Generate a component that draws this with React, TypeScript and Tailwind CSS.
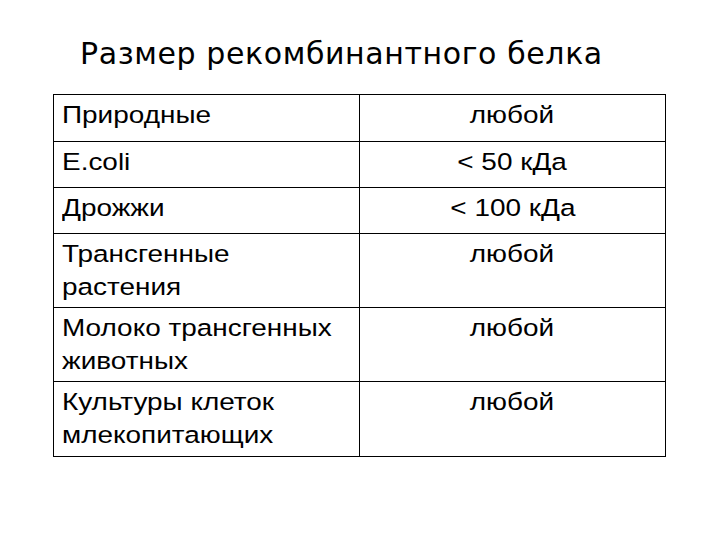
import React from "react";

const rows: { left: string[]; right: string; h: string }[] = [
  { left: ["Природные"], right: "любой", h: "h-[47px]" },
  { left: ["E.coli"], right: "< 50 кДа", h: "h-[46px]" },
  { left: ["Дрожжи"], right: "< 100 кДа", h: "h-[46px]" },
  { left: ["Трансгенные", "растения"], right: "любой", h: "h-[74px]" },
  { left: ["Молоко трансгенных", "животных"], right: "любой", h: "h-[74px]" },
  { left: ["Культуры клеток", "млекопитающих"], right: "любой", h: "h-[74px]" },
];

export default function App() {
  return (
    <div className="w-[720px] h-[540px] bg-white text-black overflow-hidden">
      <div className="pt-[36px] pl-[80px] h-[94px]">
        <h1
          className="text-[30px] leading-[35px] font-normal whitespace-nowrap tracking-[0.6px]"
          style={{ fontFamily: '"DejaVu Sans", Verdana, sans-serif' }}
        >
          Размер рекомбинантного белка
        </h1>
      </div>
      <div
        className="ml-[53px] w-[613px] border border-black flex flex-col text-[24.5px] leading-[33px]"
        style={{ fontFamily: '"Liberation Sans", Arial, sans-serif' }}
      >
        {rows.map((r, i) => (
          <div
            key={i}
            className={`${r.h} grid grid-cols-[306px_1fr] ${i < rows.length - 1 ? "border-b border-black" : ""}`}
          >
            <div className="border-r border-black pl-[8px] pt-[3px]">
              {r.left.map((l, j) => (
                <div key={j} className="whitespace-nowrap">
                  <span className="inline-block origin-left scale-x-[1.14]">{l}</span>
                </div>
              ))}
            </div>
            <div className="pt-[3px] text-center whitespace-nowrap">
              <span className="inline-block origin-center scale-x-[1.14]">{r.right}</span>
            </div>
          </div>
        ))}
      </div>
    </div>
  );
}
